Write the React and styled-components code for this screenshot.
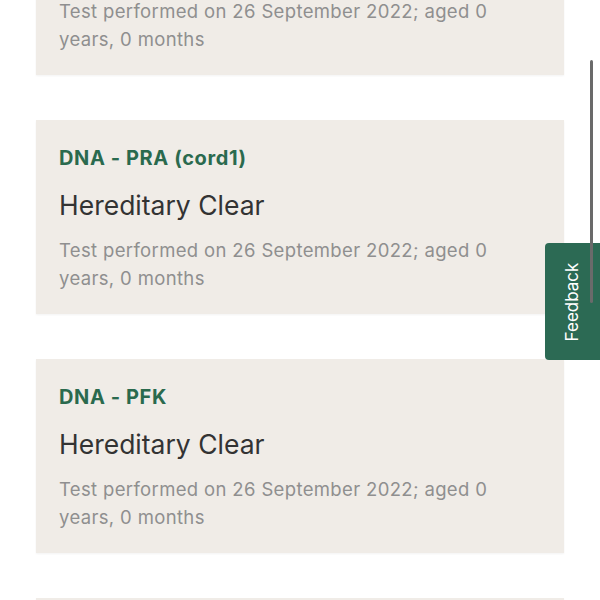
import React from 'react';
import styled, { createGlobalStyle } from 'styled-components';

const GlobalStyle = createGlobalStyle`
    html, body {
        margin: 0;
        padding: 0;
        background: #ffffff;
        overflow: hidden;
        height: 600px;
    }
    body {
        font-family: Inter, "Noto Sans", Arial, sans-serif;
    }
`;

const results = [
    { test: 'DNA - PRA (prcd)', result: 'Hereditary Clear' },
    { test: 'DNA - PRA (cord1)', result: 'Hereditary Clear' },
    { test: 'DNA - PFK', result: 'Hereditary Clear' },
    { test: 'DNA - HNPK', result: 'Hereditary Clear' },
];

const App = () => {
    return (
        <>
            <GlobalStyle />
            <Page>
                <List>
                    {results.map((r) => (
                        <Card key={r.test}>
                            <TestName>{r.test}</TestName>
                            <Result>{r.result}</Result>
                            <Meta>Test performed on 26 September 2022; aged 0 years, 0 months</Meta>
                        </Card>
                    ))}
                </List>
            </Page>
            <Scrollbar />
            <FeedbackTab>
                <FeedbackLabel>Feedback</FeedbackLabel>
            </FeedbackTab>
        </>
    );
};

const Page = styled.div`
    width: 600px;
    height: 600px;
    overflow: hidden;
`;

const List = styled.div`
    display: flex;
    flex-direction: column;
    gap: 45px;
    padding: 0 36px;
    margin-top: -119px;
`;

const Card = styled.div`
    display: flex;
    flex-direction: column;
    background: #f0ece7;
    padding: 26px 23px 22px;
    height: 194px;
    box-sizing: border-box;
    box-shadow: 0 1px 2px rgba(0, 0, 0, 0.05);
`;

const TestName = styled.div`
    font-size: 20px;
    line-height: 24px;
    font-weight: 700;
    color: #2a6a4e;
    letter-spacing: 0.6px;
`;

const Result = styled.div`
    margin-top: 18px;
    font-size: 26.5px;
    line-height: 34px;
    font-weight: 400;
    color: #333333;
    letter-spacing: 0px;
`;

const Meta = styled.div`
    margin-top: 14px;
    font-size: 18.5px;
    line-height: 28px;
    color: #8f8f8f;
    letter-spacing: 0.35px;
    max-width: 460px;
`;

const Scrollbar = styled.div`
    position: fixed;
    top: 60px;
    right: 7px;
    width: 3px;
    height: 243px;
    border-radius: 2px;
    background: #6a6a6a;
    z-index: 3;
`;

const FeedbackTab = styled.div`
    position: fixed;
    top: 243px;
    right: 0;
    width: 55px;
    height: 117px;
    background: #2c6a54;
    border-radius: 4px 0 0 4px;
    display: flex;
    align-items: center;
    justify-content: center;
    z-index: 2;
`;

const FeedbackLabel = styled.span`
    transform: rotate(-90deg);
    color: #ffffff;
    font-size: 17px;
    white-space: nowrap;
`;

export default App;
